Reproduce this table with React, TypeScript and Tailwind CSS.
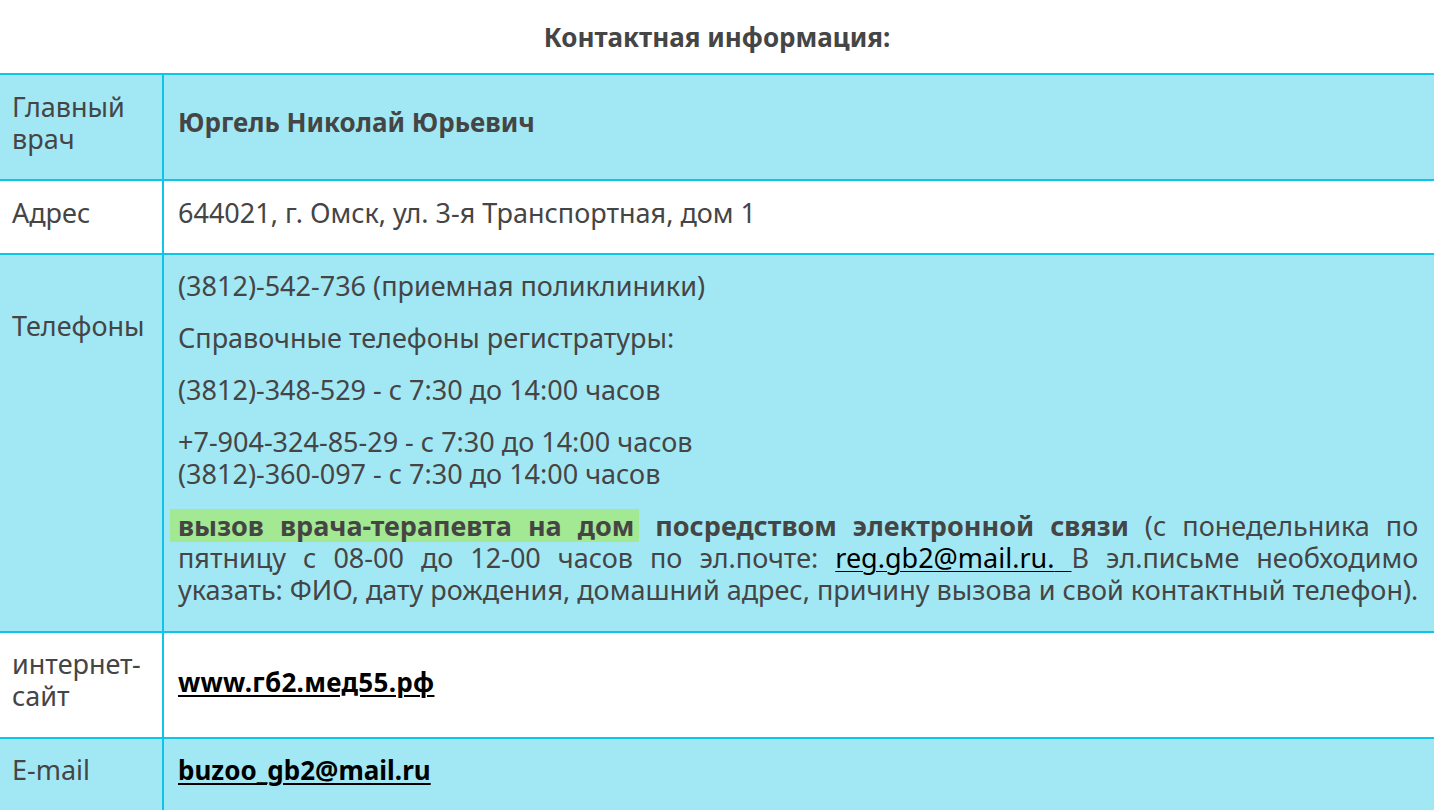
export default function App() {
  const font = { fontFamily: "'Noto Sans', 'DejaVu Sans', sans-serif" };
  return (
    <div style={font} className="w-full bg-white text-[#454545]">
      <div className="flex h-[73px] items-center justify-center text-[26px] font-bold leading-[32px]">
        Контактная информация:
      </div>
      <div className="border-t-2 border-[#0ec4e9] text-[27px] leading-[32px]">
        {/* Row 1 */}
        <div className="grid h-[106px] grid-cols-[162px_1fr] border-b-2 border-[#0ec4e9] bg-[#a2e8f4]">
          <div className="flex flex-col justify-center pl-[12px] pb-[8px]">
            <span>Главный</span>
            <span>врач</span>
          </div>
          <div className="flex items-center border-l-2 border-[#0ec4e9] pl-[14px] pb-[10px] text-[26px] font-bold">
            Юргель Николай Юрьевич
          </div>
        </div>
        {/* Row 2 */}
        <div className="grid h-[74px] grid-cols-[162px_1fr] border-b-2 border-[#0ec4e9] bg-white">
          <div className="flex items-center pl-[12px] pb-[8px]">Адрес</div>
          <div className="flex items-center border-l-2 border-[#0ec4e9] pl-[14px] pb-[8px]">
            644021, г. Омск, ул. 3-я Транспортная, дом 1
          </div>
        </div>
        {/* Row 3 */}
        <div className="grid h-[378px] grid-cols-[162px_1fr] border-b-2 border-[#0ec4e9] bg-[#a2e8f4]">
          <div className="pl-[12px] pt-[55px]">Телефоны</div>
          <div className="flex flex-col gap-[20px] border-l-2 border-[#0ec4e9] pl-[14px] pr-[16px] pt-[15px]">
            <p>(3812)-542-736 (приемная поликлиники)</p>
            <p>Справочные телефоны регистратуры:</p>
            <p>(3812)-348-529 - с 7:30 до 14:00 часов</p>
            <p>
              +7-904-324-85-29 - с 7:30 до 14:00 часов
              <br />
              (3812)-360-097 - с 7:30 до 14:00 часов
            </p>
            <div>
              <div className="text-justify [text-align-last:justify]">
                <span className="-ml-[8px] bg-[linear-gradient(to_bottom,transparent_2px,#a3e892_2px,#a3e892_35px,transparent_35px)] pl-[8px] pr-[5px] font-bold">
                  вызов врача-терапевта на дом
                </span>{" "}
                <b className="font-bold">посредством электронной связи</b> (с понедельника по
              </div>
              <div className="text-justify [text-align-last:justify]">
                пятницу с 08-00 до 12-00 часов по эл.почте:{" "}
                <a href="#" className="text-black underline decoration-1 underline-offset-[3px]">
                  reg.gb2@mail.ru.{" "}
                </a>
                В эл.письме необходимо
              </div>
              <div className="whitespace-nowrap">
                указать: ФИО, дату рождения, домашний адрес, причину вызова и свой контактный телефон).
              </div>
            </div>
          </div>
        </div>
        {/* Row 4 */}
        <div className="grid h-[106px] grid-cols-[162px_1fr] border-b-2 border-[#0ec4e9] bg-white">
          <div className="flex flex-col justify-center pl-[12px] pb-[10px]">
            <span>интернет-</span>
            <span>сайт</span>
          </div>
          <div className="flex items-center border-l-2 border-[#0ec4e9] pl-[14px] pb-[6px]">
            <a href="#" className="text-[26px] font-bold tracking-[0.3px] text-black underline decoration-2 underline-offset-[3px]">
              www.гб2.мед55.рф
            </a>
          </div>
        </div>
        {/* Row 5 */}
        <div className="grid h-[72px] grid-cols-[162px_1fr] bg-[#a2e8f4]">
          <div className="flex items-center pl-[12px] pb-[10px]">E-mail</div>
          <div className="flex items-center border-l-2 border-[#0ec4e9] pl-[14px] pb-[10px]">
            <a href="#" className="text-[26px] font-bold text-black underline decoration-2 underline-offset-[3px]">
              buzoo_gb2@mail.ru
            </a>
          </div>
        </div>
      </div>
    </div>
  );
}
